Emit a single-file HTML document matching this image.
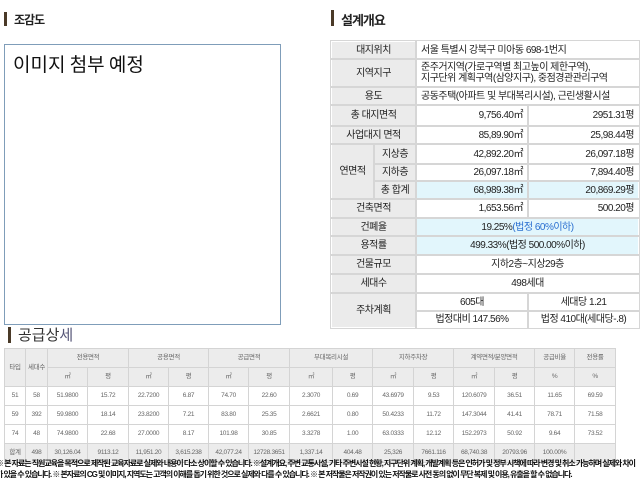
<!DOCTYPE html>
<html><head><meta charset="utf-8"><style>
*{margin:0;padding:0;box-sizing:border-box}
html,body{width:640px;height:480px;overflow:hidden}
body{background:#fff;position:relative;font-family:"Liberation Sans","Noto Sans CJK KR",sans-serif;color:#222}
.bar{position:absolute;width:3px;background:#4a3a28}
.h{position:absolute;font-weight:bold;font-size:12px;letter-spacing:-1px}
.box{position:absolute;left:4px;top:44px;width:277px;height:281px;border:1px solid #7f9db9}
.box span{position:absolute;left:8px;top:5px;font-size:19px;font-family:"Noto Sans CJK KR",sans-serif;color:#111}
table{border-collapse:collapse;position:absolute;table-layout:fixed}
#t1{left:330px;top:40px;width:308px;font-size:10px;letter-spacing:-0.5px}
#t1 td{border:2px solid #fff;outline:1px solid #d6d6d6;padding:0 4px;white-space:nowrap;line-height:11px}
#t1 .l{background:#ebebeb;text-align:center}
#t1 .r{text-align:right}
#t1 .c{text-align:center}
#t1 .b{background:#e2f6fc}
#t2{left:4px;top:348px;width:610px;font-size:6.5px;color:#666;letter-spacing:-0.3px}
#t2 tr{height:19px}
#t2 td{border:1px solid #d4d4d4;text-align:center;height:19px;line-height:8px;padding:0;white-space:nowrap;overflow:hidden}
#t2 .g td{background:#ececec}
#t2 tr.tot td{height:17px}
.clip{position:absolute;left:0;top:455px;width:640px;height:25px;overflow:hidden}
.fn{position:absolute;left:-4px;font-size:8px;line-height:10px;white-space:nowrap;color:#111;letter-spacing:-1.05px;font-weight:bold}
</style></head><body>
<div class="bar" style="left:4px;top:12px;height:14px"></div>
<div class="h" style="left:14px;top:11px">조감도</div>
<div class="box"><span>이미지 첨부 예정</span></div>

<div class="bar" style="left:331px;top:10px;height:16px"></div>
<div class="h" style="left:341px;top:10px;font-size:13px">설계개요</div>

<table id="t1">
<colgroup><col style="width:43px"><col style="width:42px"><col style="width:112px"><col style="width:111px"></colgroup>
<tr style="height:18px"><td class="l" colspan="2">대지위치</td><td colspan="2">서울 특별시 강북구 미아동 698-1번지</td></tr>
<tr style="height:28px"><td class="l" colspan="2">지역지구</td><td colspan="2">준주거지역(가로구역별 최고높이 제한구역),<br>지구단위 계획구역(삼양지구), 중점경관관리구역</td></tr>
<tr style="height:18px"><td class="l" colspan="2">용도</td><td colspan="2">공동주택(아파트 및 부대복리시설), 근린생활시설</td></tr>
<tr style="height:21px"><td class="l" colspan="2">총 대지면적</td><td class="r">9,756.40㎡</td><td class="r">2951.31평</td></tr>
<tr style="height:18px"><td class="l" colspan="2">사업대지 면적</td><td class="r">85,89.90㎡</td><td class="r">25,98.44평</td></tr>
<tr style="height:20px"><td class="l" rowspan="3">연면적</td><td class="l">지상층</td><td class="r">42,892.20㎡</td><td class="r">26,097.18평</td></tr>
<tr style="height:17px"><td class="l">지하층</td><td class="r">26,097.18㎡</td><td class="r">7,894.40평</td></tr>
<tr style="height:18px"><td class="l">총 합계</td><td class="r b">68,989.38㎡</td><td class="r b">20,869.29평</td></tr>
<tr style="height:19px"><td class="l" colspan="2">건축면적</td><td class="r">1,653.56㎡</td><td class="r">500.20평</td></tr>
<tr style="height:18px"><td class="l" colspan="2">건폐율</td><td class="c b" colspan="2">19.25%<span style="color:#2a6fd0">(법정 60%이하)</span></td></tr>
<tr style="height:19px"><td class="l" colspan="2">용적률</td><td class="c b" colspan="2">499.33%(법정 500.00%이하)</td></tr>
<tr style="height:19px"><td class="l" colspan="2">건물규모</td><td class="c" colspan="2">지하2층~지상29층</td></tr>
<tr style="height:19px"><td class="l" colspan="2">세대수</td><td class="c" colspan="2">498세대</td></tr>
<tr style="height:18px"><td class="l" colspan="2" rowspan="2">주차계획</td><td class="c">605대</td><td class="c">세대당 1.21</td></tr>
<tr style="height:17px"><td class="c">법정대비 147.56%</td><td class="c">법정 410대(세대당-.8)</td></tr>
</table>

<div class="bar" style="left:8px;top:327px;height:16px"></div>
<div style="position:absolute;left:18px;top:326px;font-size:15px;color:#333;font-family:'Noto Sans CJK KR',sans-serif;line-height:18px">공급상<span style="color:#557">세</span></div>

<table id="t2">
<colgroup><col style="width:21px"><col style="width:22px"><col style="width:40px"><col style="width:41px"><col style="width:40px"><col style="width:40px"><col style="width:40px"><col style="width:41px"><col style="width:43px"><col style="width:40px"><col style="width:41px"><col style="width:40px"><col style="width:41px"><col style="width:40px"><col style="width:40px"><col style="width:41px"></colgroup>
<tr class="g"><td rowspan="2">타입</td><td rowspan="2">세대수</td><td colspan="2">전용면적</td><td colspan="2">공용면적</td><td colspan="2">공급면적</td><td colspan="2">부대복리시설</td><td colspan="2">지하주차장</td><td colspan="2">계약면적/분양면적</td><td>공급비율</td><td>전용률</td></tr>
<tr class="g"><td>㎡</td><td>평</td><td>㎡</td><td>평</td><td>㎡</td><td>평</td><td>㎡</td><td>평</td><td>㎡</td><td>평</td><td>㎡</td><td>평</td><td>%</td><td>%</td></tr>
<tr><td>51</td><td>58</td><td>51.9800</td><td>15.72</td><td>22.7200</td><td>6.87</td><td>74.70</td><td>22.60</td><td>2.3070</td><td>0.69</td><td>43.6979</td><td>9.53</td><td>120.6079</td><td>36.51</td><td>11.65</td><td>69.59</td></tr>
<tr><td>59</td><td>392</td><td>59.9800</td><td>18.14</td><td>23.8200</td><td>7.21</td><td>83.80</td><td>25.35</td><td>2.6621</td><td>0.80</td><td>50.4233</td><td>11.72</td><td>147.3044</td><td>41.41</td><td>78.71</td><td>71.58</td></tr>
<tr><td>74</td><td>48</td><td>74.9800</td><td>22.68</td><td>27.0000</td><td>8.17</td><td>101.98</td><td>30.85</td><td>3.3278</td><td>1.00</td><td>63.0333</td><td>12.12</td><td>152.2973</td><td>50.92</td><td>9.64</td><td>73.52</td></tr>
<tr class="g tot"><td>합계</td><td>498</td><td>30,126.04</td><td>9113.12</td><td>11,951.20</td><td>3,615.238</td><td>42,077.24</td><td>12728.3651</td><td>1,337.14</td><td>404.48</td><td>25,326</td><td>7661.116</td><td>68,740.38</td><td>20793.96</td><td>100.00%</td><td></td></tr>
</table>

<div class="clip">
<div class="fn" style="top:4px">※ 본 자료는 직원교육을 목적으로 제작된 교육자료로 실제와 내용이 다소 상이할 수 있습니다. ※설계개요, 주변 교통시설, 기타 주변시설 현황, 지구단위 계획, 개발계획 등은 인허가 및 정부 시책에 따라 변경 및 취소 가능하며 실제와 차이</div>
<div class="fn" style="top:15px">가 있을 수 있습니다. ※ 본자료의 CG 및 이미지, 지역도는 고객의 이해를 돕기 위한 것으로 실제와 다를 수 있습니다. ※ 본 저작물은 저작권이 있는 저작물로 사전 동의 없이 무단 복제 및 이용, 유출을 할 수 없습니다.</div>
</div>
</body></html>
